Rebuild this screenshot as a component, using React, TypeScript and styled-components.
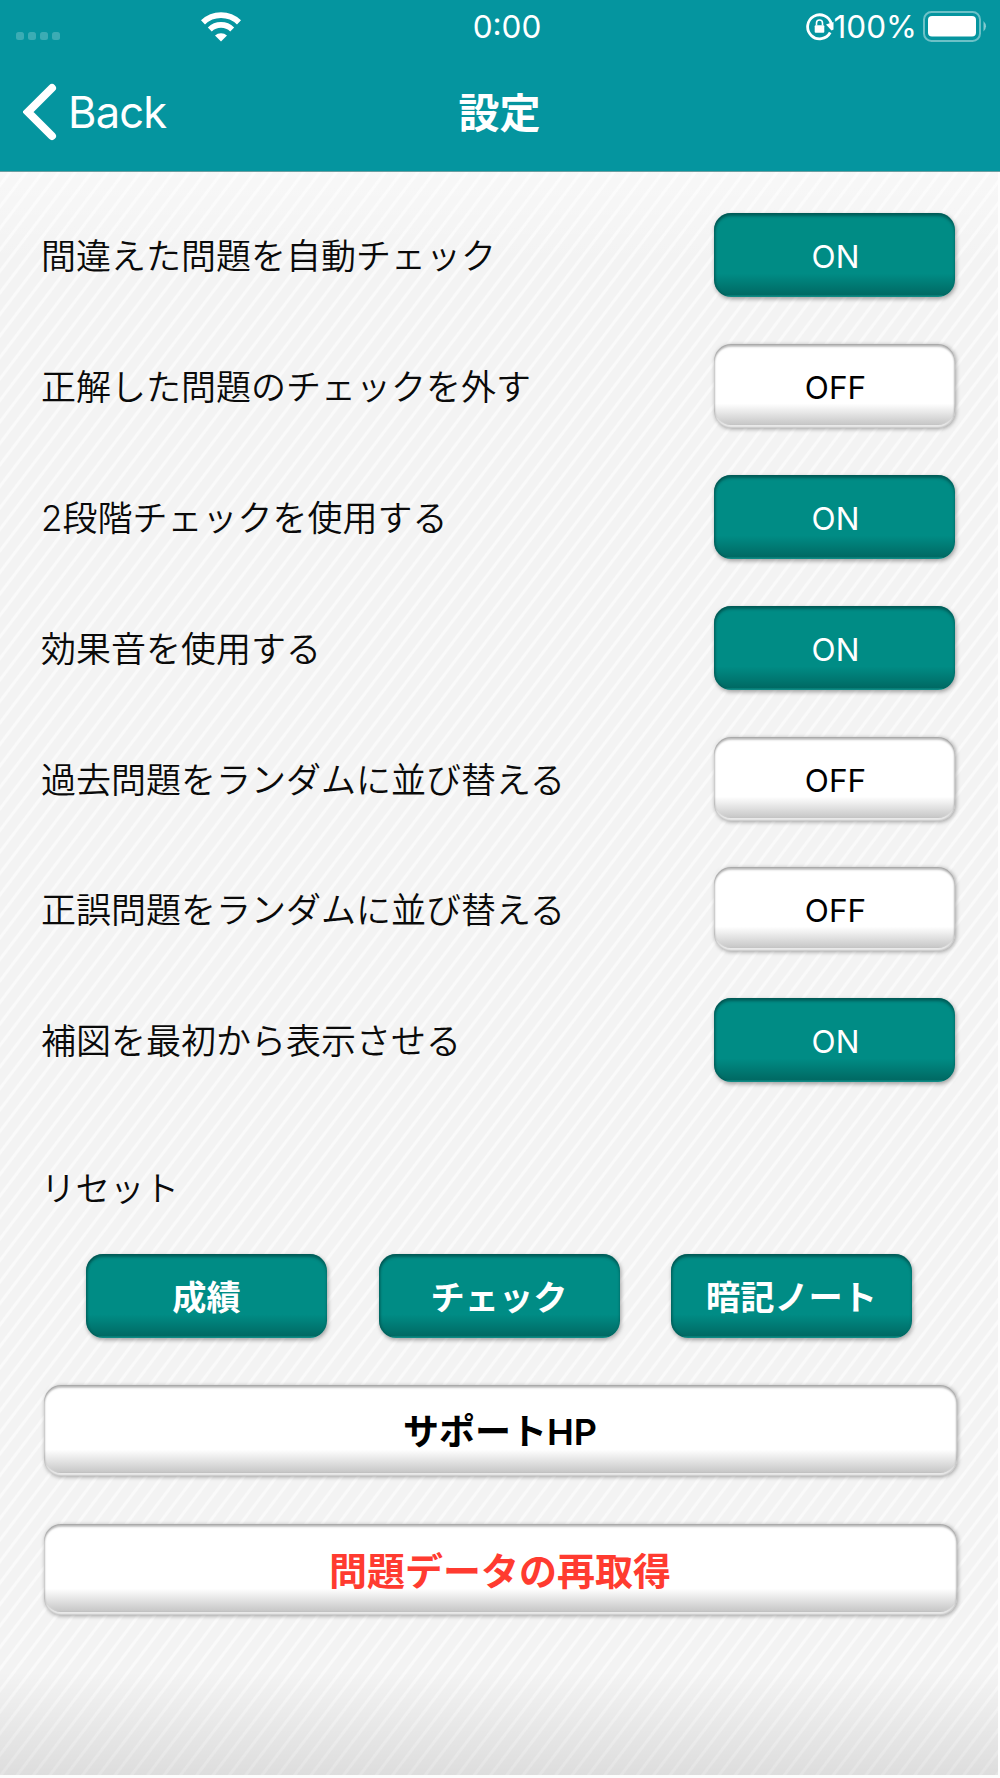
import React from "react";
import styled, { createGlobalStyle, css } from "styled-components";

const Global = createGlobalStyle`
  * { box-sizing: border-box; }
  body { margin: 0; background: #fff; }
`;

const Screen = styled.div`
  display: flex;
  flex-direction: column;
  width: 1000px;
  height: 1778px;
  overflow: hidden;
  background: #fdfdfd;
  color: #0a0a0a;
  font-family: Inter, "Noto Sans CJK JP", sans-serif;
`;

const Header = styled.header`
  flex: none;
  height: 172px;
  background: #05959f;
  border-bottom: 1px solid #6b9ea1;
  color: #fff;
`;

const StatusBar = styled.div`
  display: grid;
  grid-template-columns: 1fr auto 1fr;
  align-items: center;
  height: 52px;
  padding: 0 13px 0 16px;
`;

const StatusLeft = styled.div`
  display: flex;
  align-items: center;
`;

const Signal = styled.div`
  display: flex;
  gap: 4px;
  margin-top: 19px;
`;

const Dot = styled.i`
  width: 8px;
  height: 8px;
  border-radius: 2.5px;
  background: rgba(255, 255, 255, 0.22);
`;

const WifiIcon = styled.svg`
  margin-left: 141px;
  width: 40px;
  height: 30px;
`;

const Clock = styled.time`
  padding: 1px 0 0 11px;
  font-size: 31.5px;
  font-weight: 430;
  line-height: 52px;
`;

const StatusRight = styled.div`
  display: flex;
  align-items: center;
  justify-content: flex-end;
`;

const Percent = styled.span`
  padding-top: 1px;
  font-size: 31.5px;
  font-weight: 430;
  line-height: 52px;
  margin: 0 6px 0 0;
`;

const NavBar = styled.nav`
  display: grid;
  grid-template-columns: 1fr auto 1fr;
  align-items: center;
  height: 119px;
  padding: 0 24px 0 23px;
`;

const BackButton = styled.button`
  display: flex;
  align-items: center;
  gap: 11px;
  padding: 0;
  border: 0;
  background: none;
  color: #fff;
  font: 400 43.5px/60px Inter, sans-serif;
  letter-spacing: -0.8px;
`;

const Title = styled.h1`
  margin: 0;
  padding-top: 2px;
  font-size: 41px;
  font-weight: 700;
  line-height: 60px;
`;

const Content = styled.main`
  flex: none;
  width: 998px;
  height: 1603px;
  padding: 41px 43px 0 41px;
  background:
    linear-gradient(to bottom, rgba(255,255,255,.4), rgba(255,255,255,0) 90px, rgba(0,0,0,0) 1500px, rgba(0,0,0,.09) 1603px),
    repeating-linear-gradient(127.2deg, #f3f3f3 0 5.9px, #fafafa 7.1px 8.9px, #f3f3f3 10.1px 13px);
`;

const Row = styled.div`
  display: flex;
  align-items: center;
  justify-content: space-between;
  height: 84px;
  margin-bottom: 46.9px;
`;

const Label = styled.span`
  padding-top: 2px;
  font-size: 35px;
  line-height: 50px;
  font-weight: 350;
`;

const tones = {
  teal: css`
    color: #fff;
    background: linear-gradient(to bottom, #008c85 0 72%, #006a64 97%, #159a93 100%);
    box-shadow: inset 0 3px 3px rgba(0, 55, 52, 0.55), inset 2px 0 2px rgba(0, 70, 66, 0.3),
      1px 2px 4px rgba(0, 0, 0, 0.35);
  `,
  white: css`
    color: #000;
    background: linear-gradient(to bottom, #fff 0 71%, #c9c9c9 95%, #b4b4b4 97%);
    box-shadow: inset 0 3px 2px rgba(0, 0, 0, 0.22), inset 0 0 2px 1px rgba(0, 0, 0, 0.2),
      inset 0 -3px 1px #f1f1f1, 1px 1px 4px rgba(0, 0, 0, 0.35);
  `,
};

const Button = styled.button<{ $tone: "teal" | "white"; $wide?: boolean }>`
  display: flex;
  align-items: center;
  justify-content: center;
  flex: none;
  width: ${(p) => (p.$wide ? "913px" : "241px")};
  height: ${(p) => (p.$wide ? "91px" : "84px")};
  padding: 0;
  border: 0;
  border-radius: 17px;
  font-family: Inter, "Noto Sans CJK JP", sans-serif;
  ${(p) => tones[p.$tone]}
`;

const ToggleText = styled.span`
  padding: 4px 0 0 2px;
  font-size: 31.5px;
  font-weight: 380;
  line-height: 40px;
`;

const ButtonText = styled.span<{ $size: number; $danger?: boolean }>`
  padding-top: 3px;
  font-size: ${(p) => p.$size}px;
  line-height: 50px;
  font-weight: ${(p) => (p.$size === 36 ? 600 : 700)};
  color: ${(p) => (p.$danger ? "#ff3b30" : "inherit")};
`;

const SectionTitle = styled.h2`
  margin: 82px 0 0;
  font-size: 34.5px;
  font-weight: 350;
  line-height: 50px;
`;

const ResetRow = styled.div`
  display: flex;
  gap: 51.5px;
  margin: 40px 0 47px;
  padding-left: 45px;
`;

const Links = styled.div`
  display: grid;
  gap: 48px;
  padding-left: 2.5px;
`;

const settings: { label: string; on: boolean }[] = [
  { label: "間違えた問題を自動チェック", on: true },
  { label: "正解した問題のチェックを外す", on: false },
  { label: "2段階チェックを使用する", on: true },
  { label: "効果音を使用する", on: true },
  { label: "過去問題をランダムに並び替える", on: false },
  { label: "正誤問題をランダムに並び替える", on: false },
  { label: "補図を最初から表示させる", on: true },
];

const Wifi = () => (
  <WifiIcon viewBox="0 0 40 30" fill="none" stroke="#fff">
    <path d="M2 10.4a26 26 0 0 1 36 0" strokeWidth="5.8" />
    <path d="M8.8 17.4a16 16 0 0 1 22.4 0" strokeWidth="5.6" />
    <path d="M20 29.6l-6-6a8.6 8.6 0 0 1 12 0z" fill="#fff" stroke="none" />
  </WifiIcon>
);

const RotationLock = () => (
  <svg width="28" height="28" viewBox="0 0 28 28" fill="none">
    <path d="M24.2 19.5A12 12 0 1 1 25.3 11" stroke="#fff" strokeWidth="2.8" />
    <path d="M20 11.5l7.5-2.5v7.5l-2 1z" fill="#fff" />
    <rect x="8.7" y="12.2" width="9.6" height="7.6" rx="1" fill="#fff" />
    <path d="M10.5 12.5V10a3 3 0 0 1 6 0v2.5" stroke="#fff" strokeWidth="1.6" />
  </svg>
);

const Battery = () => (
  <svg width="64" height="31" viewBox="0 0 64 31" fill="none">
    <rect x="1" y="1" width="56" height="29" rx="7.5" stroke="#fff" strokeOpacity=".42" strokeWidth="2" />
    <rect x="5" y="5" width="48" height="20.5" rx="4" fill="#fff" />
    <path d="M60.5 10q5 5.3 0 10.6z" fill="#fff" fillOpacity=".5" />
  </svg>
);

export default function App() {
  return (
    <>
      <Global />
      <Screen>
        <Header>
          <StatusBar>
            <StatusLeft>
              <Signal>
                <Dot /><Dot /><Dot /><Dot />
              </Signal>
              <Wifi />
            </StatusLeft>
            <Clock>0:00</Clock>
            <StatusRight>
              <RotationLock />
              <Percent>100%</Percent>
              <Battery />
            </StatusRight>
          </StatusBar>
          <NavBar>
            <BackButton>
              <svg width="34" height="58" viewBox="0 0 34 58" fill="none">
                <path d="M29 5L5 29l24 24" stroke="#fff" strokeWidth="8" strokeLinecap="round" />
              </svg>
              Back
            </BackButton>
            <Title>設定</Title>
          </NavBar>
        </Header>
        <Content>
          {settings.map((s) => (
            <Row key={s.label}>
              <Label>{s.label}</Label>
              <Button $tone={s.on ? "teal" : "white"}>
                <ToggleText>{s.on ? "ON" : "OFF"}</ToggleText>
              </Button>
            </Row>
          ))}
          <SectionTitle>リセット</SectionTitle>
          <ResetRow>
            {["成績", "チェック", "暗記ノート"].map((t) => (
              <Button key={t} $tone="teal">
                <ButtonText $size={34.2}>{t}</ButtonText>
              </Button>
            ))}
          </ResetRow>
          <Links>
            <Button $tone="white" $wide>
              <ButtonText $size={36}>サポートHP</ButtonText>
            </Button>
            <Button $tone="white" $wide>
              <ButtonText $size={38} $danger>問題データの再取得</ButtonText>
            </Button>
          </Links>
        </Content>
      </Screen>
    </>
  );
}
